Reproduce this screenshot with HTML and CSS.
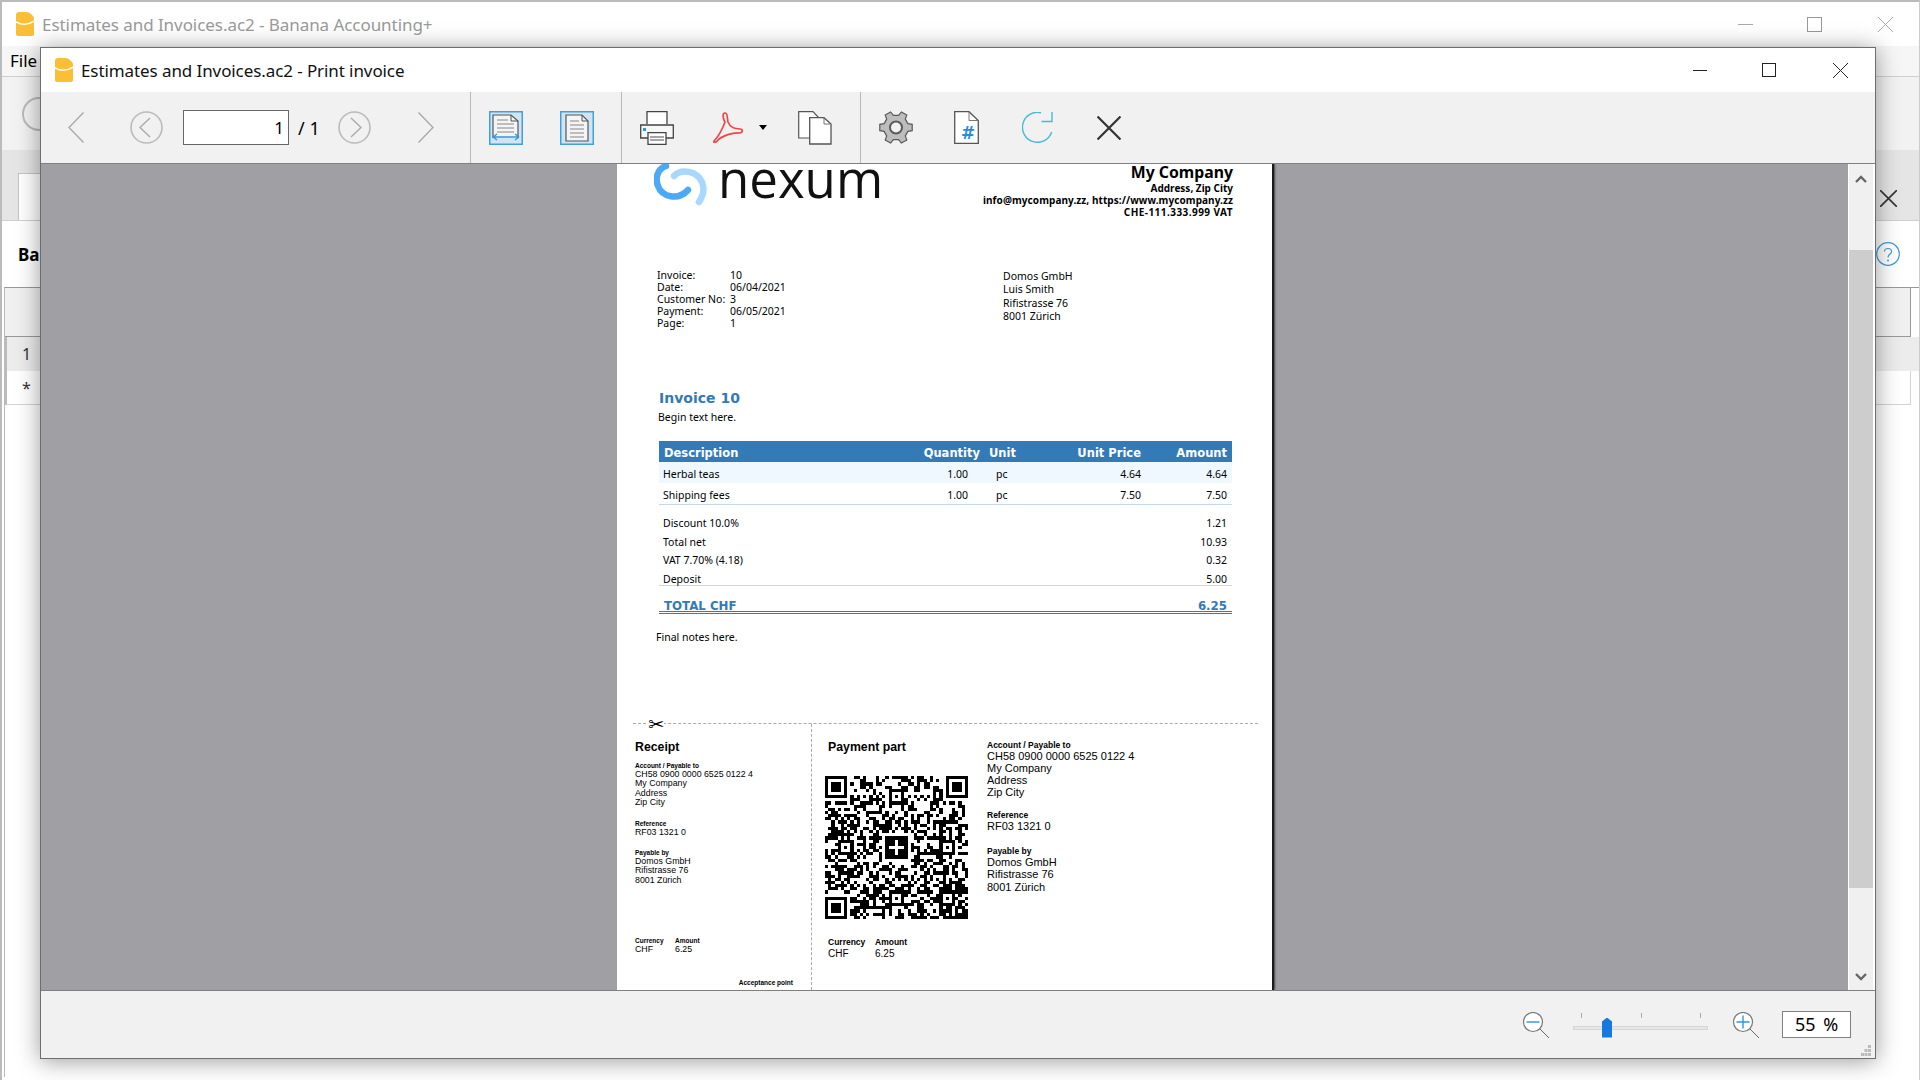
FILE: index.html
```html
<!DOCTYPE html>
<html lang="en">
<head>
    <meta charset="UTF-8">
    <title>Estimates and Invoices.ac2 - Print invoice</title>
    <link rel="stylesheet" href="styles.css">
</head>
<body>
    <!-- Main application window, mostly hidden behind the dialog -->
    <div class="main-window">
        <div class="main-title">
            <svg class="app-icon" viewBox="0 0 18 24"><path d="M0 3Q0 0 3 0H10Q13 0 15 2L17 4Q18 5 18 7V22Q18 24 16 24H2Q0 24 0 22Z" fill="#fbbf35"/><path d="M0 10Q9 15 18 9" fill="none" stroke="#fff" stroke-width="1.5"/></svg>
            <span class="main-title-text">Estimates and Invoices.ac2 - Banana Accounting+</span>
            <svg class="main-min" width="15" height="15" viewBox="0 0 15 15"><path d="M0 7.5H15" stroke="#aaa"/></svg>
            <svg class="main-max" width="15" height="15" viewBox="0 0 15 15"><rect x=".5" y=".5" width="14" height="14" fill="none" stroke="#999"/></svg>
            <svg class="main-close" width="15" height="15" viewBox="0 0 15 15"><path d="M0 0L15 15M15 0L0 15" stroke="#aaa"/></svg>
        </div>
        <div class="main-menu">File</div>
        <div class="main-toolbar"><div class="main-back"></div></div>
        <div class="main-tabs">
            <div class="main-tab"></div>
            <svg class="main-tab-close" width="17" height="17" viewBox="0 0 17 17"><path d="M0 0L17 17M17 0L0 17" stroke="#333" stroke-width="1.6"/></svg>
        </div>
        <div class="main-heading">
            <b>Ba</b>
            <svg width="24" height="24" viewBox="0 0 24 24"><circle cx="12" cy="12" r="11.3" fill="none" stroke="#3d9ad6" stroke-width="1.2"/><path d="M8.5 9.5C8.5 5.5 15.5 5.5 15.5 9.5C15.5 12.5 12 12 12 15.5" fill="none" stroke="#3d9ad6" stroke-width="1.2"/><circle cx="12" cy="18.5" r=".9" fill="#3d9ad6"/></svg>
        </div>
        <div class="main-table">
            <div class="main-row head-row"><span></span></div>
            <div class="main-row num-row"><span>1</span></div>
            <div class="main-row star-row"><span>*</span></div>
        </div>
    </div>

    <div class="dialog">
        <div class="dialog-title">
            <svg class="app-icon" viewBox="0 0 18 24"><path d="M0 3Q0 0 3 0H10Q13 0 15 2L17 4Q18 5 18 7V22Q18 24 16 24H2Q0 24 0 22Z" fill="#fbbf35"/><path d="M0 10Q9 15 18 9" fill="none" stroke="#fff" stroke-width="1.5"/></svg>
            <span class="dialog-title-text">Estimates and Invoices.ac2 - Print invoice</span>
            <svg class="win-min" width="14" height="14" viewBox="0 0 14 14"><path d="M0 7.5H14" stroke="#222"/></svg>
            <svg class="win-max" width="14" height="14" viewBox="0 0 14 14"><rect x=".5" y=".5" width="13" height="13" fill="none" stroke="#222"/></svg>
            <svg class="win-close" width="15" height="15" viewBox="0 0 15 15"><path d="M0 0L15 15M15 0L0 15" stroke="#222"/></svg>
        </div>

        <div class="toolbar">
            <div class="tool-group group-nav">
                <svg class="nav-first" width="16" height="31" viewBox="0 0 16 31"><path d="M15.5 .5L1 15.5L15.5 30.5" fill="none" stroke="#aaa" stroke-width="1.4"/></svg>
                <svg class="nav-prev" width="33" height="33" viewBox="0 0 33 33"><circle cx="16.5" cy="16.5" r="15.5" fill="none" stroke="#bbb" stroke-width="1.6"/><path d="M20 7L10 16.5L20 26" fill="none" stroke="#aaa" stroke-width="1.4"/></svg>
                <div class="page-input">1</div>
                <span class="page-total">/ 1</span>
                <svg class="nav-next" width="33" height="33" viewBox="0 0 33 33"><circle cx="16.5" cy="16.5" r="15.5" fill="none" stroke="#bbb" stroke-width="1.6"/><path d="M13 7L23 16.5L13 26" fill="none" stroke="#aaa" stroke-width="1.4"/></svg>
                <svg class="nav-last" width="16" height="31" viewBox="0 0 16 31"><path d="M.5 .5L15 15.5L.5 30.5" fill="none" stroke="#aaa" stroke-width="1.4"/></svg>
            </div>
            <div class="tool-group group-fit">
                <svg class="fit-width" width="34" height="34" viewBox="0 0 34 34"><rect x=".75" y=".75" width="32.5" height="32.5" fill="#cfe5f6" stroke="#41a0dc" stroke-width="1.5"/><path d="M4 27V4H22L29 10V27" fill="#f4f4f4" stroke="#555" stroke-width="1.2"/><path d="M22 4V10H29" fill="none" stroke="#555"/><path d="M8 9H19M8 13H25M8 17H25M8 21H25" stroke="#aaa" stroke-width="1.3"/><path d="M4 26H30M4 26L8 23M4 26L8 29M30 26L26 23M30 26L26 29" fill="none" stroke="#2f96dc" stroke-width="1.3"/></svg>
                <svg class="fit-page" width="34" height="34" viewBox="0 0 34 34"><rect x=".75" y=".75" width="32.5" height="32.5" fill="#cfe5f6" stroke="#41a0dc" stroke-width="1.5"/><path d="M6 4H22L28 10V30H6Z" fill="#f4f4f4" stroke="#555" stroke-width="1.2"/><path d="M22 4V10H28" fill="none" stroke="#555"/><path d="M10 10H19M10 14H24M10 18H24M10 22H24M10 26H24" stroke="#aaa" stroke-width="1.3"/></svg>
            </div>
            <div class="tool-group group-output">
                <svg class="tool-print" width="34" height="34" viewBox="0 0 34 34"><path d="M7 13V.7H27V13" fill="#fff" stroke="#444" stroke-width="1.3"/><path d="M.7 14H33.3V27H.7Z" fill="#f7f7f7" stroke="#444" stroke-width="1.3"/><rect x="3" y="17" width="3" height="3" fill="#2f96dc"/><path d="M8 21.7H26V33.3H8Z" fill="#fff" stroke="#444" stroke-width="1.3"/><path d="M10 26H24M10 29H24" stroke="#888" stroke-width="1.3"/></svg>
                <svg class="tool-pdf" width="30" height="31" viewBox="0 0 30 31"><path d="M12 1C9 1 10 7 12 10C9 18 5 25 1 29C0 31 3 31 5 28C9 24 20 20 27 21C30 20 30 17 27 17C22 17 17 15 15 10C14 6 15 1 12 1Z" fill="none" stroke="#f04545" stroke-width="1.7"/></svg>
                <span class="pdf-arrow"></span>
                <svg class="tool-copy" width="34" height="34" viewBox="0 0 34 34"><path d="M.7 .7H15L21 7V27H.7Z" fill="#fff" stroke="#555" stroke-width="1.2"/><path d="M11.7 6.7H26L33 13V33H11.7Z" fill="#fff" stroke="#555" stroke-width="1.3"/><path d="M26 6.7V13H33" fill="none" stroke="#777"/></svg>
            </div>
            <div class="tool-group group-extra">
                <svg class="tool-gear" width="34" height="33" viewBox="0 0 34 33"><g transform="translate(17 16.5)"><path d="M11.9-3.9L16.2-3.2V3.2L11.9 3.9L9.3 8.4L10.8 12.5L5.4 15.6L2.6 12.2H-2.6L-5.4 15.6L-10.8 12.5L-9.3 8.4L-11.9 3.9L-16.2 3.2V-3.2L-11.9-3.9L-9.3-8.4L-10.8-12.5L-5.4-15.6L-2.6-12.2H2.6L5.4-15.6L10.8-12.5L9.3-8.4Z" fill="#bdbdbd" stroke="#5a5a5a" stroke-width="1.2"/><circle r="6" fill="#f1f1f1" stroke="#5a5a5a" stroke-width="2"/></g></svg>
                <div class="tool-doc">
                    <svg width="25" height="33" viewBox="0 0 25 33"><path d="M.7 .7H15L24.3 9.5V32.3H.7Z" fill="#fff" stroke="#555" stroke-width="1.3"/><path d="M15 .7V9.5H24.3" fill="none" stroke="#777"/></svg>
                    <span class="doc-hash">#</span>
                </div>
                <svg class="tool-refresh" width="31" height="31" viewBox="0 0 31 31"><path d="M19 .7A15 15 0 1 0 29.7 20" fill="none" stroke="#45bbd6" stroke-width="1.4"/><path d="M30 0V9.5H19.5" fill="none" stroke="#45bbd6" stroke-width="1.4"/></svg>
                <svg class="tool-cancel" width="24" height="24" viewBox="0 0 24 24"><path d="M.5 .5L23.5 23.5M23.5 .5L.5 23.5" stroke="#333" stroke-width="2.2"/></svg>
            </div>
        </div>

        <div class="viewer">
            <div class="viewer-scroll">
                <div class="page">
                    <div class="page-head">
                        <div class="logo">
                            <svg class="logo-mark" width="54" height="42" viewBox="0 0 54 42"><path d="M12 2C3 5 1 15 4 22C8 33 24 37 34 26" fill="none" stroke="#4da9f5" stroke-width="6.5" stroke-linecap="round"/><path d="M20 12C27 4 43 7 48 18C51 25 49 32 45 38" fill="none" stroke="#a8d8ff" stroke-width="6.5" stroke-linecap="round"/></svg>
                            <span class="logo-text">nexum</span>
                        </div>
                        <div class="company">
                            <div class="company-name">My Company</div>
                            <div>Address, Zip City</div>
                            <div class="company-web">info@mycompany.zz, https://www.mycompany.zz</div>
                            <div class="company-vat">CHE-111.333.999 VAT</div>
                        </div>
                    </div>

                    <div class="info">
                        <div class="info-grid">
                            <span>Invoice:</span><span>10</span>
                            <span>Date:</span><span>06/04/2021</span>
                            <span>Customer No:</span><span>3</span>
                            <span>Payment:</span><span>06/05/2021</span>
                            <span>Page:</span><span>1</span>
                        </div>
                        <div class="address">
                            <div>Domos GmbH</div>
                            <div>Luis Smith</div>
                            <div>Rifistrasse 76</div>
                            <div>8001 Zürich</div>
                        </div>
                    </div>

                    <h1 class="invoice-title">Invoice 10</h1>
                    <p class="begin-text">Begin text here.</p>

                    <div class="items">
                        <div class="item-row item-head">
                            <span>Description</span>
                            <span class="num">Quantity</span>
                            <span>Unit</span>
                            <span class="num">Unit Price</span>
                            <span class="num">Amount</span>
                        </div>
                        <div class="item-row item-shaded">
                            <span>Herbal teas</span>
                            <span class="num">1.00</span>
                            <span>pc</span>
                            <span class="num">4.64</span>
                            <span class="num">4.64</span>
                        </div>
                        <div class="item-row item-last">
                            <span>Shipping fees</span>
                            <span class="num">1.00</span>
                            <span>pc</span>
                            <span class="num">7.50</span>
                            <span class="num">7.50</span>
                        </div>
                    </div>

                    <div class="totals">
                        <div class="total-row"><span>Discount 10.0%</span><span>1.21</span></div>
                        <div class="total-row"><span>Total net</span><span>10.93</span></div>
                        <div class="total-row"><span>VAT 7.70% (4.18)</span><span>0.32</span></div>
                        <div class="total-row total-deposit"><span>Deposit</span><span>5.00</span></div>
                        <div class="total-row total-final"><span>TOTAL CHF</span><span>6.25</span></div>
                    </div>

                    <p class="final-notes">Final notes here.</p>

                    <div class="slip">
                        <span class="scissors">✂</span>
                        <div class="receipt">
                            <div class="slip-title">Receipt</div>
                            <div class="r-label r-first">Account / Payable to</div>
                            <div class="r-value">CH58 0900 0000 6525 0122 4</div>
                            <div class="r-value">My Company</div>
                            <div class="r-value">Address</div>
                            <div class="r-value">Zip City</div>
                            <div class="r-label r-ref">Reference</div>
                            <div class="r-value">RF03 1321 0</div>
                            <div class="r-label r-payer">Payable by</div>
                            <div class="r-value">Domos GmbH</div>
                            <div class="r-value">Rifistrasse 76</div>
                            <div class="r-value">8001 Zürich</div>
                            <div class="r-amount">
                                <div><div class="r-label">Currency</div><div class="r-value">CHF</div></div>
                                <div><div class="r-label">Amount</div><div class="r-value">6.25</div></div>
                            </div>
                            <div class="r-label r-accept">Acceptance point</div>
                        </div>
                        <div class="payment">
                            <div class="pay-left">
                                <div class="slip-title">Payment part</div>
                                <svg id="qr" class="qr" width="143" height="143" shape-rendering="crispEdges"></svg>
                                <div class="pay-amount">
                                    <div><div class="p-label">Currency</div><div class="p-value">CHF</div></div>
                                    <div><div class="p-label">Amount</div><div class="p-value">6.25</div></div>
                                </div>
                            </div>
                            <div class="pay-right">
                                <div class="p-label">Account / Payable to</div>
                                <div class="p-value">CH58 0900 0000 6525 0122 4</div>
                                <div class="p-value">My Company</div>
                                <div class="p-value">Address</div>
                                <div class="p-value">Zip City</div>
                                <div class="p-label p-ref">Reference</div>
                                <div class="p-value">RF03 1321 0</div>
                                <div class="p-label p-payer">Payable by</div>
                                <div class="p-value">Domos GmbH</div>
                                <div class="p-value">Rifistrasse 76</div>
                                <div class="p-value">8001 Zürich</div>
                            </div>
                        </div>
                    </div>
                </div>
            </div>
            <div class="scrollbar">
                <svg class="scroll-arrow" width="12" height="8" viewBox="0 0 12 8"><path d="M1 7L6 2L11 7" fill="none" stroke="#666" stroke-width="2.4"/></svg>
                <div class="scroll-thumb"></div>
                <svg class="scroll-arrow" width="12" height="8" viewBox="0 0 12 8"><path d="M1 1L6 6L11 1" fill="none" stroke="#666" stroke-width="2.4"/></svg>
            </div>
        </div>

        <div class="statusbar">
            <svg class="zoom-icon" width="28" height="26" viewBox="0 0 28 26"><circle cx="11" cy="10" r="9.5" fill="#fff" stroke="#777" stroke-width="1.2"/><path d="M4.5 10H17.5" stroke="#2f96dc" stroke-width="1.4"/><path d="M18 17L27 26" stroke="#666"/></svg>
            <div class="slider">
                <span class="slider-tick tick-a"></span>
                <span class="slider-tick tick-b"></span>
                <span class="slider-tick tick-c"></span>
                <div class="slider-track"></div>
                <div class="slider-thumb"></div>
            </div>
            <svg class="zoom-icon zoom-plus" width="28" height="26" viewBox="0 0 28 26"><circle cx="11" cy="10" r="9.5" fill="#fff" stroke="#777" stroke-width="1.2"/><path d="M4.5 10H17.5M11 3.5V16.5" stroke="#2f96dc" stroke-width="1.4"/><path d="M18 17L27 26" stroke="#666"/></svg>
            <div class="zoom-box">55 %</div>
            <svg class="grip" width="11" height="11" viewBox="0 0 11 11"><path d="M7 0h3v3H7zM3.500 4h3v3h-3zM7 4h3v3H7zM0 8h3v3H0zM3.500 8h3v3h-3zM7 8h3v3H7z" fill="#bbb"/></svg>
        </div>
    </div>

    <script src="qr.js"></script>
</body>
</html>
```

FILE: styles.css
```css
* {
    box-sizing: border-box;
}
html, body {
    margin: 0;
    height: 100%;
    overflow: hidden;
}
body {
    position: relative;
    width: 1920px;
    height: 1080px;
    font-family: "Noto Sans", sans-serif;
    background-color: #fff;
    color: #000;
}

/* Main window behind the dialog */
.main-window {
    height: 1080px;
    border-top: 2px solid #bbb;
    border-left: 2px solid #bbb;
    border-right: 1px solid #ccc;
}
.main-title {
    display: flex;
    align-items: center;
    height: 44px;
    padding-left: 14px;
}
.app-icon {
    width: 18px;
    height: 24px;
    flex: none;
}
.main-title-text {
    margin-left: 8px;
    font-size: 17px;
    letter-spacing: -0.06px;
    color: #9a9a9a;
}
.main-min {
    margin-left: auto;
}
.main-max {
    margin-left: 54px;
}
.main-close {
    margin-left: 56px;
    margin-right: 26px;
}
.main-menu {
    height: 31px;
    padding-left: 8px;
    font-size: 17px;
    line-height: 30px;
    background-color: #f6f6f6;
    border-bottom: 1px solid #d0d0d0;
}
.main-toolbar {
    display: flex;
    align-items: center;
    height: 73px;
    padding-left: 20px;
    background-color: #f2f2f2;
}
.main-back {
    width: 34px;
    height: 34px;
    border: 2px solid #bbb;
    border-radius: 50%;
}
.main-tabs {
    display: flex;
    height: 71px;
    padding: 23px 22px 0 16px;
    background-color: #e5e5e5;
    border-bottom: 1px solid #cfcfcf;
}
.main-tab {
    width: 60px;
    background-color: #fff;
    border: 1px solid #c4c4c4;
    border-bottom: 0;
}
.main-tab-close {
    margin: 17px 0 0 auto;
}
.main-heading {
    display: flex;
    align-items: center;
    justify-content: space-between;
    height: 66px;
    padding: 0 19px 0 16px;
    font-size: 17px;
}
.main-table {
    margin-left: 2px;
    border-top: 1px solid #999;
    border-left: 1px solid #bbb;
    height: 790px;
}
.main-row {
    display: flex;
    height: 34px;
    padding-right: 8px;
    font-size: 16px;
}
.main-row span {
    display: block;
    width: 100%;
    text-align: left;
    padding-left: 15px;
    line-height: 35px;
    color: #333;
}
.head-row {
    height: 49px;
}
.head-row span {
    background-color: #f0f0f0;
    border-right: 1px solid #999;
    border-bottom: 1px solid #999;
}
.num-row {
    padding-right: 0;
}
.num-row span {
    background-color: #ececec;
    border-left: 2px solid #bbb;
}
.star-row span {
    background-color: #fff;
    border-right: 1px solid #d4d4d4;
    border-bottom: 1px solid #d4d4d4;
    border-left: 2px solid #bbb;
}

/* Print preview dialog */
.dialog {
    position: absolute;
    left: 40px;
    top: 47px;
    display: flex;
    flex-direction: column;
    width: 1836px;
    height: 1012px;
    background-color: #fff;
    border: 1px solid #6e6e6e;
    box-shadow: 0 2px 22px rgba(0, 0, 0, 0.4);
}
.dialog-title {
    display: flex;
    align-items: center;
    flex: none;
    height: 44px;
    padding-left: 14px;
    background-color: #fff;
}
.dialog-title-text {
    margin-left: 8px;
    font-size: 17px;
    letter-spacing: -0.09px;
    color: #111;
}
.win-min {
    margin-left: auto;
}
.win-max {
    margin-left: 55px;
}
.win-close {
    margin-left: 57px;
    margin-right: 27px;
}

.toolbar {
    display: flex;
    flex: none;
    height: 72px;
    background-color: #f1f1f1;
    border-bottom: 1px solid #808080;
}
.tool-group {
    display: flex;
    align-items: center;
    flex: none;
    height: 71px;
    border-right: 1px solid #b8b8b8;
}
.tool-group svg {
    flex: none;
}
.group-nav {
    width: 430px;
    padding-left: 27px;
}
.nav-prev {
    margin-left: 46px;
}
.page-input {
    width: 106px;
    height: 35px;
    margin-left: 20px;
    padding-right: 4px;
    font-size: 17px;
    line-height: 34px;
    text-align: right;
    background-color: #fff;
    border: 1px solid #666;
}
.page-total {
    width: 21px;
    margin-left: 9px;
    font-size: 18px;
    white-space: nowrap;
}
.nav-next {
    margin-left: 19px;
}
.nav-last {
    margin-left: 47px;
}
.group-fit {
    width: 151px;
    padding-left: 18px;
}
.fit-page {
    margin-left: 37px;
}
.group-output {
    width: 239px;
    padding-left: 18px;
}
.tool-pdf {
    margin-left: 39px;
}
.pdf-arrow {
    width: 0;
    height: 0;
    margin-left: 16px;
    border-top: 5px solid #000;
    border-left: 4.500px solid transparent;
    border-right: 4.500px solid transparent;
}
.tool-copy {
    margin-left: 31px;
}
.group-extra {
    border-right: 0;
    padding-left: 18px;
}
.tool-doc {
    position: relative;
    width: 25px;
    height: 33px;
    margin-left: 41px;
}
.doc-hash {
    position: absolute;
    left: 7px;
    top: 12px;
    font: bold 17px/20px "DejaVu Sans", sans-serif;
    color: #2a8ad4;
}
.tool-refresh {
    margin-left: 43px;
}
.tool-cancel {
    margin-left: 44px;
}

.viewer {
    display: flex;
    flex: none;
    height: 827px;
    background-color: #a0a0a4;
    border-bottom: 1px solid #808080;
}
.viewer-scroll {
    display: flex;
    justify-content: center;
    align-items: flex-start;
    flex: 1;
    overflow: hidden;
}
.scrollbar {
    display: flex;
    flex-direction: column;
    align-items: center;
    flex: none;
    width: 27px;
    padding-top: 11px;
    padding-bottom: 9px;
    background-color: #f0f0f0;
    border-left: 1px solid #fff;
    border-right: 2px solid #fff;
}
.scroll-thumb {
    align-self: stretch;
    flex: none;
    height: 638px;
    margin: 67px 0 85px;
    background-color: #cdcdcd;
}

/* Invoice page */
.page {
    flex: none;
    width: 655px;
    height: 826px;
    overflow: hidden;
    background-color: #fff;
    box-shadow: 2px 0 1px #1c1c1c, 3px 0 2px #555;
    font-size: 10.500px;
}
.page-head {
    display: flex;
    justify-content: space-between;
    height: 54px;
    padding: 0 39px 0 37px;
}
.logo {
    display: flex;
    align-items: flex-start;
}
.logo-text {
    margin-left: 10px;
    font-family: "Open Sans", sans-serif;
    font-size: 51px;
    font-weight: 500;
    line-height: 28px;
    color: #111;
}
.company {
    font-size: 10px;
    font-weight: bold;
    line-height: 12px;
    text-align: right;
    white-space: nowrap;
}
.company-name {
    margin-bottom: 2px;
    font-size: 15.800px;
    line-height: 16px;
}
.company-web {
    letter-spacing: 0.08px;
}
.company-vat {
    letter-spacing: 0.45px;
}
.info {
    display: flex;
    height: 60px;
    margin-top: 51px;
    padding-left: 40px;
}
.info-grid {
    display: grid;
    grid-template-columns: 73px 1fr;
    grid-auto-rows: 12px;
    width: 346px;
    line-height: 12px;
}
.address {
    padding-top: 1px;
    line-height: 13.300px;
}
.invoice-title {
    margin: 59px 0 0 42px;
    font-family: "DejaVu Sans", sans-serif;
    font-size: 14px;
    line-height: 20px;
    color: #337ab7;
}
.begin-text {
    margin: 3px 0 0 41px;
    line-height: 12px;
}
.items {
    margin: 18px 40px 0 42px;
}
.item-row {
    display: grid;
    grid-template-columns: 261px 60px 80px 81px 91px;
    height: 21px;
    padding-top: 2px;
    line-height: 21px;
}
.item-row span {
    padding-left: 4px;
    white-space: nowrap;
}
.item-row .num {
    padding: 0 12px 0 0;
    text-align: right;
}
.item-row span:nth-child(3) {
    padding-left: 16px;
}
.item-row span:nth-child(4) {
    padding-right: 0;
}
.item-row span:nth-child(5) {
    padding-right: 5px;
}
.item-head {
    padding-top: 2px;
    font-family: "DejaVu Sans", sans-serif;
    font-size: 11.500px;
    font-weight: bold;
    color: #fff;
    background-color: #337ab7;
}
.item-head span:first-child {
    padding-left: 5px;
}
.item-head span:nth-child(2) {
    padding-right: 0;
}
.item-head span:nth-child(3) {
    padding-left: 9px;
}
.item-shaded {
    background-color: #eff7ff;
}
.item-last {
    height: 22px;
    border-bottom: 1px solid #c6d8e8;
}
.totals {
    margin: 9px 40px 0 42px;
}
.total-row {
    display: flex;
    justify-content: space-between;
    height: 18.500px;
    padding: 0 5px 0 4px;
    line-height: 18.500px;
}
.total-deposit {
    height: 16px;
    border-bottom: 1px solid #c6d8e8;
}
.total-final {
    height: 28px;
    padding: 13px 5px 0 5px;
    font-family: "DejaVu Sans", sans-serif;
    font-size: 11.800px;
    font-weight: bold;
    line-height: 14px;
    color: #337ab7;
    border-bottom: 3px double #337ab7;
}
.final-notes {
    margin: 17px 0 0 39px;
    line-height: 12px;
}

/* QR bill at the bottom of the page */
.slip {
    position: relative;
    display: flex;
    width: 625px;
    height: 267px;
    margin: 80px 0 0 16px;
    font-family: "Liberation Sans", sans-serif;
    border-top: 1px dashed #aaa;
}
.scissors {
    position: absolute;
    left: 15px;
    top: -10px;
    font: 19px/20px "DejaVu Sans", sans-serif;
    background-color: #fff;
}
.receipt {
    width: 179px;
    padding: 15px 18px 0 2px;
    border-right: 1px dashed #aaa;
}
.slip-title {
    font-size: 12.300px;
    font-weight: bold;
    line-height: 16px;
}
.r-label {
    font-size: 6.500px;
    font-weight: bold;
    line-height: 8px;
}
.r-value {
    font-size: 8.800px;
    line-height: 9.500px;
}
.r-first {
    margin-top: 7px;
}
.r-ref {
    margin-top: 12px;
}
.r-payer {
    margin-top: 11.500px;
}
.r-amount {
    display: flex;
    gap: 12px;
    margin-top: 51.500px;
}
.r-amount > div {
    width: 28px;
}
.r-accept {
    margin-top: 25px;
    text-align: right;
}
.payment {
    display: flex;
    flex: 1;
}
.pay-left {
    width: 175px;
    padding: 15px 0 0 16px;
}
.qr {
    display: block;
    margin: 21px 0 0 -3px;
}
.pay-amount {
    display: flex;
    gap: 10px;
    margin-top: 18px;
}
.pay-amount > div {
    width: 37px;
}
.pay-right {
    padding-top: 16px;
    white-space: nowrap;
}
.p-label {
    font-size: 8.500px;
    font-weight: bold;
    line-height: 10px;
}
.pay-amount .p-label {
    line-height: 11px;
}
.p-value {
    font-size: 11px;
    line-height: 12.300px;
}
.pay-amount .p-value {
    font-size: 10px;
    line-height: 11px;
}
.p-ref {
    margin-top: 11.800px;
}
.p-payer {
    margin-top: 13.200px;
}

/* Zoom controls */
.statusbar {
    position: relative;
    display: flex;
    align-items: center;
    justify-content: flex-end;
    flex: none;
    height: 67px;
    padding-right: 24px;
    background-color: #f1f1f1;
}
.zoom-plus {
    margin-left: 24px;
}
.slider {
    position: relative;
    width: 135px;
    height: 26px;
    margin-left: 23px;
}
.slider-tick {
    position: absolute;
    top: 1px;
    width: 1px;
    height: 5px;
    background-color: #aaa;
}
.tick-a {
    left: 8px;
}
.tick-b {
    left: 68px;
}
.tick-c {
    left: 127px;
}
.slider-track {
    position: absolute;
    left: 0;
    top: 14px;
    width: 135px;
    height: 4px;
    background-color: #e6e6e6;
    border: 1px solid #d6d6d6;
}
.slider-thumb {
    position: absolute;
    left: 29px;
    top: 6px;
    width: 10px;
    height: 20px;
    background-color: #1478dc;
    clip-path: polygon(50% 0, 100% 20%, 100% 100%, 0 100%, 0 20%);
}
.zoom-box {
    width: 69px;
    height: 27px;
    margin-left: 22px;
    font-size: 18px;
    line-height: 25px;
    word-spacing: 3px;
    text-align: center;
    background-color: #fff;
    border: 1px solid #808080;
}
.grip {
    position: absolute;
    right: 3px;
    bottom: 2px;
}
```

FILE: qr.js
```js
// Draws the Swiss QR code: fixed finder patterns and centre cross, seeded data modules
const qr = document.getElementById('qr');
const modules = 45;
const size = 143 / modules;
let seed = 7321;

function nextBit() {
    seed = (seed * 1103515245 + 12345) & 0x7fffffff;
    return (seed >> 16) & 1;
}

const grid = [];
for (let y = 0; y < modules; y++) {
    grid.push([]);
    for (let x = 0; x < modules; x++) {
        grid[y].push(nextBit());
    }
}

function block(x, y, w, h, on) {
    for (let j = y; j < y + h; j++) {
        for (let i = x; i < x + w; i++) {
            grid[j][i] = on;
        }
    }
}

function finder(x, y) {
    block(x, y, 7, 7, 1);
    block(x + 1, y + 1, 5, 5, 0);
    block(x + 2, y + 2, 3, 3, 1);
}

function alignment(x, y) {
    block(x, y, 5, 5, 1);
    block(x + 1, y + 1, 3, 3, 0);
    block(x + 2, y + 2, 1, 1, 1);
}

// Quiet strip around the finders
block(0, 0, 8, 8, 0);
block(37, 0, 8, 8, 0);
block(0, 37, 8, 8, 0);
finder(0, 0);
finder(38, 0);
finder(0, 38);

// Alignment patterns and timing lines
[[20, 4], [4, 20], [36, 20], [20, 36], [36, 36]].forEach(([x, y]) => alignment(x, y));
for (let i = 8; i < 37; i++) {
    grid[6][i] = (i + 1) % 2;
    grid[i][6] = (i + 1) % 2;
}

// Swiss cross in the middle
block(18, 18, 9, 9, 0);
block(19, 19, 7, 7, 1);
block(22, 20, 1, 5, 0);
block(20, 22, 5, 1, 0);

let d = '';
for (let y = 0; y < modules; y++) {
    for (let x = 0; x < modules; x++) {
        if (grid[y][x]) {
            d += `M${(x * size).toFixed(2)} ${(y * size).toFixed(2)}h${size.toFixed(2)}v${size.toFixed(2)}h-${size.toFixed(2)}z`;
        }
    }
}
const path = document.createElementNS('http://www.w3.org/2000/svg', 'path');
path.setAttribute('d', d);
qr.appendChild(path);
```
